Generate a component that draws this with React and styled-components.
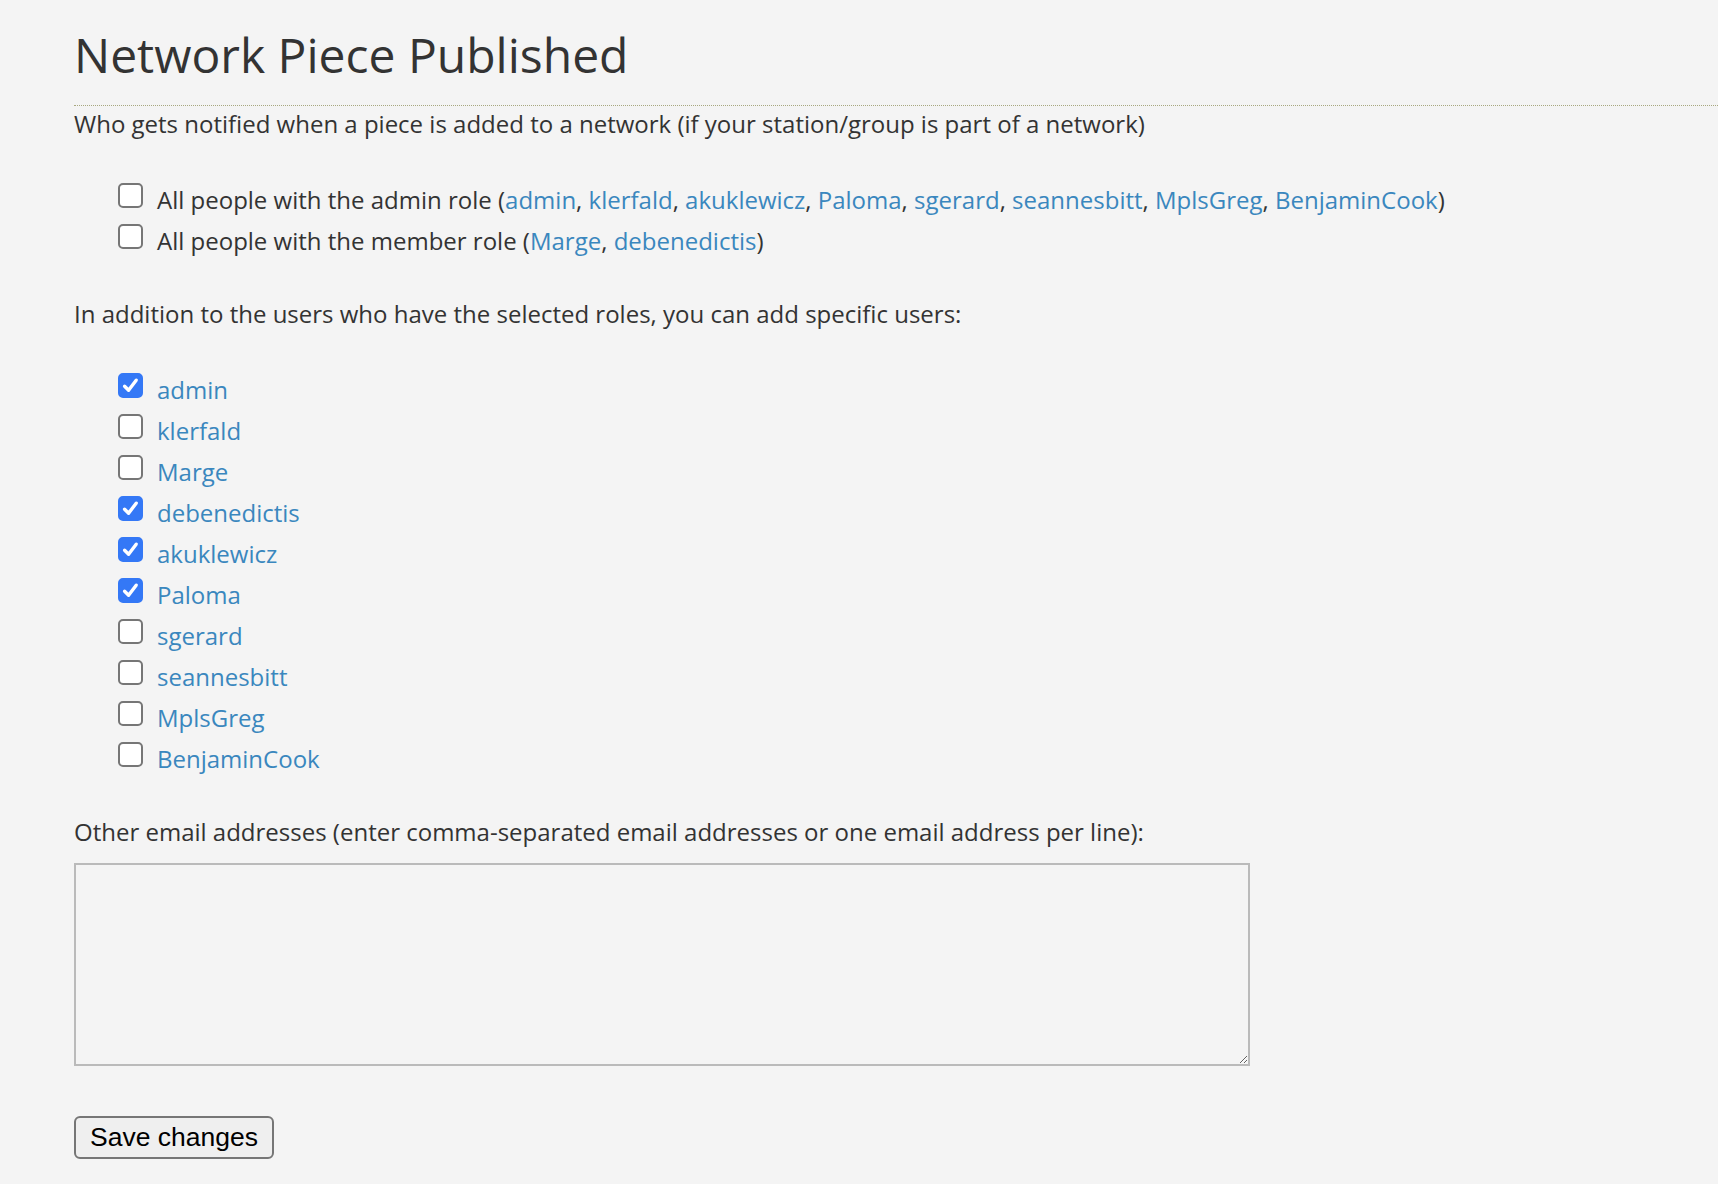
import { useState } from "react";
import styled, { createGlobalStyle } from "styled-components";

const admins = [
  "admin",
  "klerfald",
  "akuklewicz",
  "Paloma",
  "sgerard",
  "seannesbitt",
  "MplsGreg",
  "BenjaminCook",
];
const members = ["Marge", "debenedictis"];

const initialUsers = [
  { name: "admin", checked: true },
  { name: "klerfald", checked: false },
  { name: "Marge", checked: false },
  { name: "debenedictis", checked: true },
  { name: "akuklewicz", checked: true },
  { name: "Paloma", checked: true },
  { name: "sgerard", checked: false },
  { name: "seannesbitt", checked: false },
  { name: "MplsGreg", checked: false },
  { name: "BenjaminCook", checked: false },
];

const CheckBox = ({ checked, onToggle }) => (
  <Box $checked={checked} onClick={onToggle}>
    {checked && (
      <svg width="19" height="19" viewBox="0 0 19 19">
        <path
          d="M3.6 10.2 L7.6 14.2 L15.2 4.2"
          fill="none"
          stroke="#fff"
          strokeWidth="3.4"
          strokeLinecap="round"
          strokeLinejoin="round"
        />
      </svg>
    )}
  </Box>
);

const NameList = ({ names }) =>
  names.map((n, i) => (
    <span key={n}>
      <Link href="#">{n}</Link>
      {i < names.length - 1 ? ", " : ""}
    </span>
  ));

const App = () => {
  const [roles, setRoles] = useState({ admin: false, member: false });
  const [users, setUsers] = useState(initialUsers);

  const toggleUser = (name) => {
    setUsers(
      users.map((u) => (u.name === name ? { ...u, checked: !u.checked } : u))
    );
  };

  return (
    <>
      <GlobalStyle />
      <Page>
        <Title>Network Piece Published</Title>
        <Intro>
          Who gets notified when a piece is added to a network (if your
          station/group is part of a network)
        </Intro>

        <RoleList>
          <Row>
            <CheckBox
              checked={roles.admin}
              onToggle={() => setRoles({ ...roles, admin: !roles.admin })}
            />
            <Label>
              All people with the admin role (<NameList names={admins} />)
            </Label>
          </Row>
          <Row>
            <CheckBox
              checked={roles.member}
              onToggle={() => setRoles({ ...roles, member: !roles.member })}
            />
            <Label>
              All people with the member role (<NameList names={members} />)
            </Label>
          </Row>
        </RoleList>

        <Text>
          In addition to the users who have the selected roles, you can add
          specific users:
        </Text>

        <UserList>
          {users.map((u) => (
            <Row key={u.name}>
              <CheckBox
                checked={u.checked}
                onToggle={() => toggleUser(u.name)}
              />
              <Label>
                <Link href="#">{u.name}</Link>
              </Label>
            </Row>
          ))}
        </UserList>

        <EmailLabel>
          Other email addresses (enter comma-separated email addresses or one
          email address per line):
        </EmailLabel>
        <Emails />

        <SaveButton>Save changes</SaveButton>
      </Page>
    </>
  );
};

export default App;

const GlobalStyle = createGlobalStyle`
  html, body {
    margin: 0;
    background: #f4f4f4;
  }
  body {
    font-family: "Open Sans", "Liberation Sans", sans-serif;
    color: #333;
  }
`;

const Page = styled.div`
  padding: 0 0 26px 74px;
`;

const Title = styled.h1`
  margin: 25px 0 0;
  padding-bottom: 20px;
  font-size: 48px;
  line-height: 60px;
  font-weight: 400;
  color: #333;
  border-bottom: 1px dotted #a8a880;
`;

const Text = styled.p`
  margin: 0;
  font-size: 24px;
  line-height: 30px;
`;

const Intro = styled(Text)`
  margin-top: 3px;
`;

const EmailLabel = styled(Text)`
  margin-top: 38px;
`;

const RoleList = styled.div`
  display: flex;
  flex-direction: column;
  margin: 40px 0 38px 44px;
`;

const UserList = styled(RoleList)`
  margin: 40px 0 0 44px;
`;

const Row = styled.div`
  display: flex;
  align-items: flex-start;
  gap: 14px;
  height: 41px;
`;

const Box = styled.span`
  box-sizing: border-box;
  width: 25px;
  height: 25px;
  margin-top: 4px;
  flex-shrink: 0;
  display: flex;
  align-items: center;
  justify-content: center;
  border-radius: 5px;
  cursor: pointer;
  background: ${(p) => (p.$checked ? "#3478f6" : "#fff")};
  border: 2px solid ${(p) => (p.$checked ? "#3478f6" : "#767676")};
`;

const Label = styled.span`
  font-size: 24px;
  line-height: 41px;
  color: #333;
  white-space: nowrap;
`;

const Link = styled.a`
  color: #3a87be;
  text-decoration: none;
`;

const Emails = styled.textarea`
  display: block;
  box-sizing: border-box;
  width: 1176px;
  height: 203px;
  margin-top: 16px;
  border: 2px solid #bababa;
  background: #f4f4f4;
  font-family: "Open Sans", sans-serif;
  font-size: 24px;
  outline: none;
`;

const SaveButton = styled.button`
  display: block;
  box-sizing: border-box;
  margin-top: 50px;
  height: 43px;
  padding: 0 14px;
  font-family: "Liberation Sans", Arial, sans-serif;
  font-size: 26.5px;
  color: #000;
  background: #efefef;
  border: 2px solid #767676;
  border-radius: 6px;
  cursor: pointer;
`;
